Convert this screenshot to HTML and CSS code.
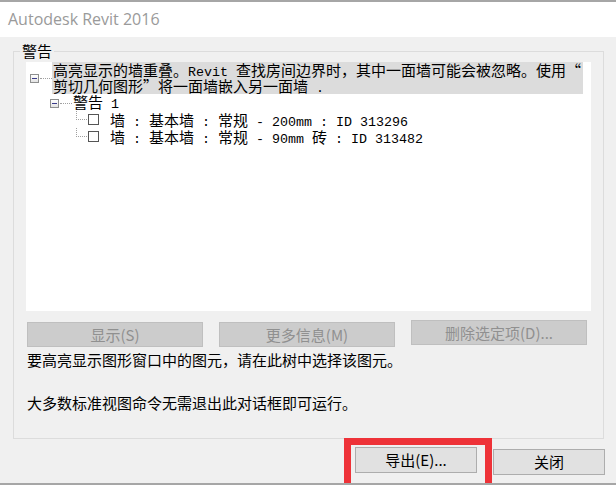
FILE: index.html
```html
<!DOCTYPE html>
<html lang="zh-CN">
<head>
    <meta charset="UTF-8">
    <title>Autodesk Revit 2016</title>
    <link rel="stylesheet" href="styles.css">
</head>
<body>
    <div class="window">
        <div class="titlebar">Autodesk Revit 2016</div>

        <div class="content">
            <div class="group">
                <div class="legend">警告</div>

                <div class="tree">
                    <div class="row first">
                        <span class="exp"></span><span class="dots"></span>
                        <div class="label sel">
                            <div class="line">高亮显示的墙重叠。<span class="m">Revit </span>查找房间边界时，其中一面墙可能会被忽略。使用“</div>
                            <div class="line">剪切几何图形”将一面墙嵌入另一面墙<span class="m"> .</span></div>
                        </div>
                    </div>
                    <div class="kids">
                        <div class="row">
                            <span class="exp"></span><span class="dots"></span>
                            <span class="label">警告<span class="m"> 1</span></span>
                        </div>
                        <div class="leaves">
                            <div class="row leaf">
                                <span class="hook"></span><span class="chk"></span>
                                <span class="label">墙<span class="m"> : </span>基本墙<span class="m"> : </span>常规<span class="m"> - 200mm : ID 313296</span></span>
                            </div>
                            <div class="row leaf">
                                <span class="hook"></span><span class="chk"></span>
                                <span class="label">墙<span class="m"> : </span>基本墙<span class="m"> : </span>常规<span class="m"> - 90mm </span>砖<span class="m"> : ID 313482</span></span>
                            </div>
                        </div>
                    </div>
                </div>

                <div class="actions">
                    <button class="btn off">显示(S)</button>
                    <button class="btn off">更多信息(M)</button>
                    <button class="btn off up">删除选定项(D)...</button>
                </div>

                <p class="hint">要高亮显示图形窗口中的图元，请在此树中选择该图元。</p>
                <p class="hint second">大多数标准视图命令无需退出此对话框即可运行。</p>
            </div>

            <div class="footer">
                <button class="btn export">导出(E)...</button>
                <button class="btn close">关闭</button>
                <div class="mark"></div>
            </div>
        </div>
    </div>
</body>
</html>
```

FILE: styles.css
```css
body {
    margin: 0;
    background-color: #f0f0f0;
    font-family: 'Noto Sans CJK SC', sans-serif;
    font-size: 15px;
    color: #000;
}

.window {
    width: 616px;
    height: 485px;
    box-sizing: border-box;
    border-top: 2px solid #a6a6a6;
    border-bottom: 2px solid #a6a6a6;
    display: flex;
    flex-direction: column;
    overflow: hidden;
}

.titlebar {
    height: 35px;
    background-color: #fff;
    color: #9a9a9a;
    font-family: 'Open Sans', sans-serif;
    font-size: 16px;
    line-height: 35px;
    padding-left: 8px;
}

.content {
    flex: 1;
    background-color: #f0f0f0;
    position: relative;
}

.group {
    margin: 14px 12px 0 13px;
    height: 386px;
    border: 1px solid #dcdcdc;
    padding: 0 12px;
}

.legend {
    width: max-content;
    height: 16px;
    line-height: 16px;
    background-color: #f0f0f0;
    margin: -9px 0 0 -6px;
    padding: 0 2px;
}

.tree {
    margin-top: 3px;
    height: 249px;
    background-color: #fff;
    padding-left: 4px;
    box-sizing: border-box;
    line-height: 16px;
    overflow: hidden;
}

.m {
    font-family: 'Liberation Mono', monospace;
    font-size: 13.34px;
    line-height: 1;
}

.row {
    display: flex;
    align-items: center;
    height: 16px;
    white-space: nowrap;
}

.row.first {
    height: 32px;
    margin-bottom: 1px;
}

.exp {
    width: 7px;
    height: 7px;
    border: 1px solid #8e8f8f;
    background: linear-gradient(#fff, #e3e3e3);
    position: relative;
    flex: none;
}

.exp::after {
    content: '';
    position: absolute;
    left: 1px;
    top: 3px;
    width: 5px;
    height: 1px;
    background-color: #3b3b8a;
}

.dots {
    width: 12px;
    margin-left: 1px;
    border-top: 1px dotted #a0a0a0;
    flex: none;
}

.label {
    padding-left: 1px;
}

.sel {
    background-color: #dcdcdc;
    width: 530px;
    height: 32px;
}

.line {
    height: 16px;
    line-height: 16px;
}

.kids {
    margin-left: 20px;
}

.leaves {
    margin-left: 26px;
}

.row.leaf {
    height: 17px;
    align-items: flex-start;
}

.hook {
    width: 10px;
    height: 8px;
    border-left: 1px dotted #a0a0a0;
    border-bottom: 1px dotted #a0a0a0;
    flex: none;
}

.chk {
    width: 9px;
    height: 9px;
    border: 1px solid #555;
    margin: 3px 10px 0 1px;
    flex: none;
}

.leaf .label {
    height: 17px;
    line-height: 17px;
}

.actions {
    display: flex;
    gap: 16px;
    margin-top: 11px;
    align-items: flex-start;
    padding-left: 1px;
}

.btn {
    font-family: 'Noto Sans CJK SC', sans-serif;
    font-size: 15px;
    height: 25px;
    padding: 0;
    line-height: 22px;
    border: 1px solid #adadad;
    background-color: #e1e1e1;
    color: #000;
}

.btn.off {
    width: 176px;
    background-color: #cccccc;
    border-color: #bfbfbf;
    color: #909090;
}

.btn.up {
    margin-top: -2px;
}

.hint {
    margin: 3px 0 0 1px;
    height: 20px;
    line-height: 20px;
}

.hint.second {
    margin-top: 23px;
}

.footer {
    display: flex;
    justify-content: flex-end;
    align-items: flex-start;
    gap: 16px;
    padding: 8px 11px 0 0;
    position: relative;
}

.export {
    width: 122px;
    height: 26px;
}

.close {
    width: 112px;
    height: 26px;
    margin-top: 2px;
}

.mark {
    position: absolute;
    left: 344px;
    top: -1px;
    width: 134px;
    height: 60px;
    border: 7px solid #ee3238;
}
```
